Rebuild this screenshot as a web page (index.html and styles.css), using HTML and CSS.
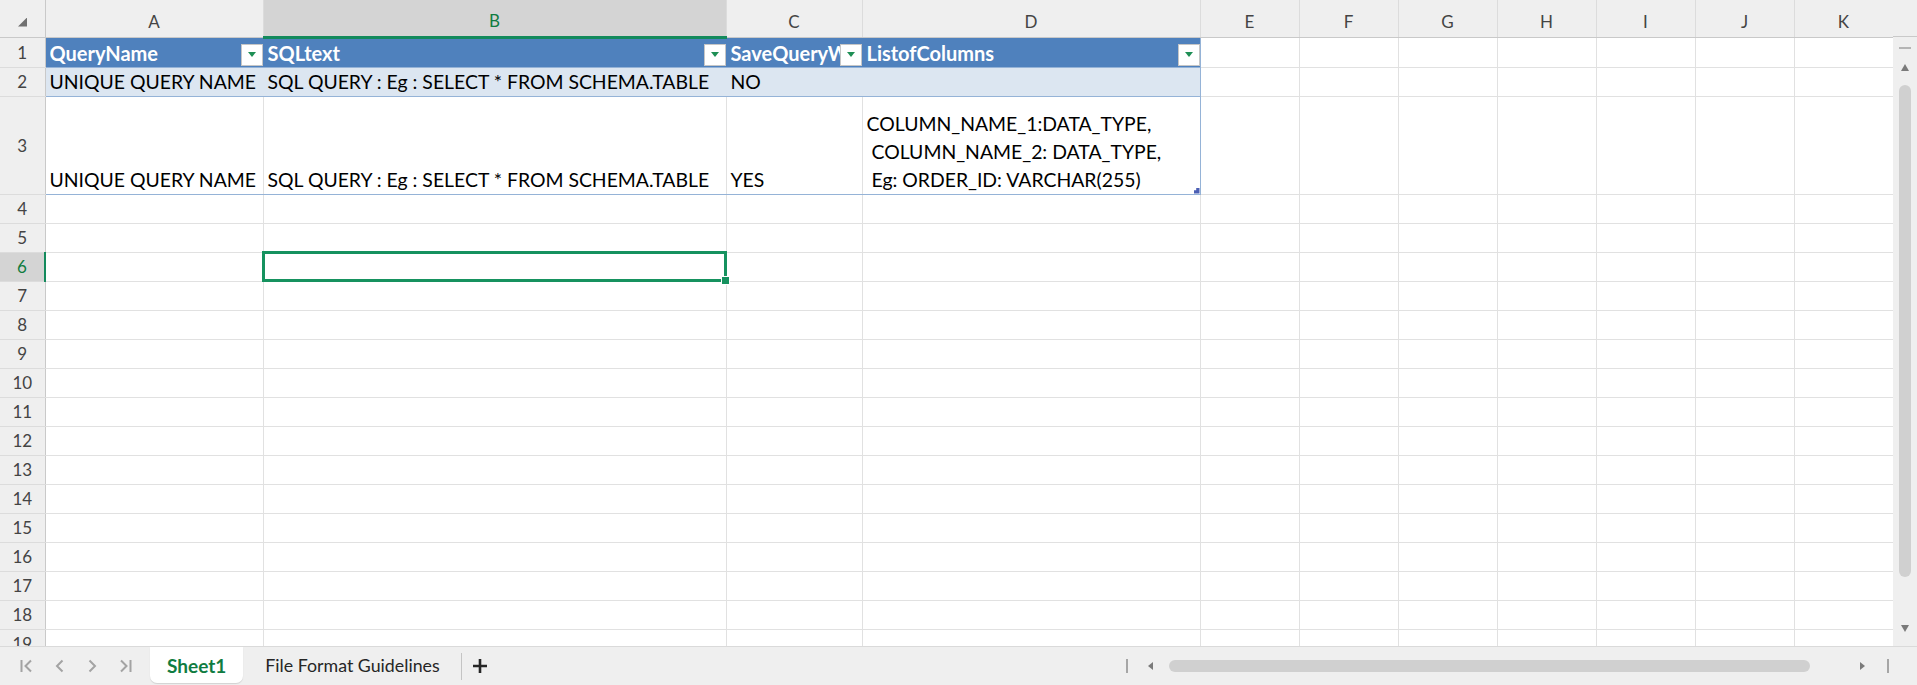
FILE: index.html
```html
<!DOCTYPE html>
<html lang="en">
<head>
    <meta charset="UTF-8">
    <title>Sheet1</title>
    <link rel="stylesheet" href="styles.css">
</head>
<body>
<div class="app">
    <div class="sheet">
        <div class="grid-wrap">
            <table class="grid">
                <colgroup>
                    <col class="c-row"><col class="c-a"><col class="c-b"><col class="c-c"><col class="c-d">
                    <col class="c-n"><col class="c-n"><col class="c-n"><col class="c-n"><col class="c-n"><col class="c-n"><col class="c-n">
                </colgroup>
                <thead>
                    <tr class="col-row">
                        <th class="corner"><span class="corner-mark"></span></th>
                        <th class="col-h">A</th>
                        <th class="col-h active">B</th>
                        <th class="col-h">C</th>
                        <th class="col-h">D</th>
                        <th class="col-h">E</th>
                        <th class="col-h">F</th>
                        <th class="col-h">G</th>
                        <th class="col-h">H</th>
                        <th class="col-h">I</th>
                        <th class="col-h">J</th>
                        <th class="col-h">K</th>
                    </tr>
                </thead>
                <tbody>
                    <tr class="r">
                        <th class="rh">1</th>
                        <td class="t-hd"><div class="hd"><span class="lbl">QueryName</span><span class="filter"></span></div></td>
                        <td class="t-hd"><div class="hd"><span class="lbl">SQLtext</span><span class="filter"></span></div></td>
                        <td class="t-hd"><div class="hd"><span class="lbl">SaveQueryW</span><span class="filter"></span></div></td>
                        <td class="t-hd t-edge"><div class="hd"><span class="lbl">ListofColumns</span><span class="filter"></span></div></td>
                        <td></td><td></td><td></td><td></td><td></td><td></td><td></td>
                    </tr>
                    <tr class="r">
                        <th class="rh">2</th>
                        <td class="t-band">UNIQUE QUERY NAME</td>
                        <td class="t-band">SQL QUERY : Eg : SELECT * FROM SCHEMA.TABLE</td>
                        <td class="t-band">NO</td>
                        <td class="t-band t-edge"></td>
                        <td></td><td></td><td></td><td></td><td></td><td></td><td></td>
                    </tr>
                    <tr class="tall">
                        <th class="rh">3</th>
                        <td class="t-last">UNIQUE QUERY NAME</td>
                        <td class="t-last">SQL QUERY : Eg : SELECT * FROM SCHEMA.TABLE</td>
                        <td class="t-last">YES</td>
                        <td class="t-last t-edge grip"><div class="multi">COLUMN_NAME_1:DATA_TYPE,
 COLUMN_NAME_2: DATA_TYPE,
 Eg: ORDER_ID: VARCHAR(255)</div></td>
                        <td></td><td></td><td></td><td></td><td></td><td></td><td></td>
                    </tr>
                    <tr class="r"><th class="rh">4</th><td></td><td></td><td></td><td></td><td></td><td></td><td></td><td></td><td></td><td></td><td></td></tr>
                    <tr class="r"><th class="rh">5</th><td></td><td></td><td></td><td></td><td></td><td></td><td></td><td></td><td></td><td></td><td></td></tr>
                    <tr class="r"><th class="rh active">6</th><td></td><td class="sel"></td><td></td><td></td><td></td><td></td><td></td><td></td><td></td><td></td><td></td></tr>
                    <tr class="r"><th class="rh">7</th><td></td><td></td><td></td><td></td><td></td><td></td><td></td><td></td><td></td><td></td><td></td></tr>
                    <tr class="r"><th class="rh">8</th><td></td><td></td><td></td><td></td><td></td><td></td><td></td><td></td><td></td><td></td><td></td></tr>
                    <tr class="r"><th class="rh">9</th><td></td><td></td><td></td><td></td><td></td><td></td><td></td><td></td><td></td><td></td><td></td></tr>
                    <tr class="r"><th class="rh">10</th><td></td><td></td><td></td><td></td><td></td><td></td><td></td><td></td><td></td><td></td><td></td></tr>
                    <tr class="r"><th class="rh">11</th><td></td><td></td><td></td><td></td><td></td><td></td><td></td><td></td><td></td><td></td><td></td></tr>
                    <tr class="r"><th class="rh">12</th><td></td><td></td><td></td><td></td><td></td><td></td><td></td><td></td><td></td><td></td><td></td></tr>
                    <tr class="r"><th class="rh">13</th><td></td><td></td><td></td><td></td><td></td><td></td><td></td><td></td><td></td><td></td><td></td></tr>
                    <tr class="r"><th class="rh">14</th><td></td><td></td><td></td><td></td><td></td><td></td><td></td><td></td><td></td><td></td><td></td></tr>
                    <tr class="r"><th class="rh">15</th><td></td><td></td><td></td><td></td><td></td><td></td><td></td><td></td><td></td><td></td><td></td></tr>
                    <tr class="r"><th class="rh">16</th><td></td><td></td><td></td><td></td><td></td><td></td><td></td><td></td><td></td><td></td><td></td></tr>
                    <tr class="r"><th class="rh">17</th><td></td><td></td><td></td><td></td><td></td><td></td><td></td><td></td><td></td><td></td><td></td></tr>
                    <tr class="r"><th class="rh">18</th><td></td><td></td><td></td><td></td><td></td><td></td><td></td><td></td><td></td><td></td><td></td></tr>
                    <tr class="r"><th class="rh">19</th><td></td><td></td><td></td><td></td><td></td><td></td><td></td><td></td><td></td><td></td><td></td></tr>
                </tbody>
            </table>
        </div>
        <div class="vscroll">
            <div class="vs-head"></div>
            <span class="vs-dash"></span>
            <span class="vs-up"></span>
            <span class="vs-thumb"></span>
            <span class="vs-down"></span>
        </div>
    </div>

    <div class="tabbar">
        <div class="nav">
            <span class="nav-btn">
                <svg width="13" height="14" viewBox="0 0 13 14"><path d="M1.5 1v12M11 1.5 5.5 7l5.5 5.5" fill="none" stroke="#a3a3a3" stroke-width="2"/></svg>
            </span>
            <span class="nav-btn">
                <svg width="9" height="14" viewBox="0 0 9 14"><path d="M7.5 1.5 2 7l5.5 5.5" fill="none" stroke="#a3a3a3" stroke-width="2"/></svg>
            </span>
            <span class="nav-btn">
                <svg width="9" height="14" viewBox="0 0 9 14"><path d="M1.5 1.5 7 7l-5.5 5.5" fill="none" stroke="#a3a3a3" stroke-width="2"/></svg>
            </span>
            <span class="nav-btn">
                <svg width="13" height="14" viewBox="0 0 13 14"><path d="M2 1.5 7.5 7 2 12.5M11.5 1v12" fill="none" stroke="#a3a3a3" stroke-width="2"/></svg>
            </span>
        </div>
        <div class="tab active">Sheet1</div>
        <div class="tab">File Format Guidelines</div>
        <span class="tab-sep"></span>
        <span class="add">
            <svg width="14" height="14" viewBox="0 0 14 14"><path d="M7 0v14M0 7h14" stroke="#262626" stroke-width="2.6"/></svg>
        </span>
        <div class="hscroll">
            <span class="hs-sep"></span>
            <span class="hs-left"></span>
            <span class="hs-thumb"></span>
            <span class="hs-right"></span>
            <span class="hs-sep end"></span>
        </div>
    </div>
</div>
</body>
</html>
```

FILE: styles.css
```css
* {
    box-sizing: border-box;
}
body {
    margin: 0;
    font-family: Lato, "Liberation Sans", sans-serif;
    background-color: #fff;
}
.app {
    width: 1917px;
    height: 685px;
    display: flex;
    flex-direction: column;
    overflow: hidden;
}
.sheet {
    flex: none;
    height: 646px;
    display: flex;
    overflow: hidden;
}
.grid-wrap {
    flex: none;
    width: 1893px;
    overflow: hidden;
}

/* grid */
.grid {
    table-layout: fixed;
    width: 1893px;
    border-collapse: collapse;
    font-size: 19.4px;
    color: #000;
}
.c-row { width: 45px; }
.c-a { width: 218px; }
.c-b { width: 463px; }
.c-c { width: 136px; }
.c-d { width: 338px; }
.c-n { width: 99px; }

.col-row { height: 37px; }
.r { height: 29px; }
.tall { height: 98px; }

.corner {
    background-color: #efefef;
    border-right: 1px solid #c9c9c9;
    border-bottom: 1px solid #c9c9c9;
    padding: 0 0 10px 18px;
    vertical-align: bottom;
}
.corner-mark {
    display: block;
    width: 9px;
    height: 9px;
    background-color: #707070;
    clip-path: polygon(100% 0, 100% 100%, 0 100%);
}
.col-h {
    background-color: #efefef;
    color: #444;
    font-size: 17px;
    font-weight: 400;
    line-height: 24px;
    padding: 0 0 3px;
    text-align: center;
    vertical-align: bottom;
    border-right: 1px solid #dcdcdc;
    border-bottom: 1px solid #c9c9c9;
}
.col-h.active {
    background-color: #d4d4d4;
    color: #107c41;
    border-bottom: 3px solid #138a5c;
}
.rh {
    background-color: #efefef;
    color: #444;
    font-size: 17px;
    font-weight: 400;
    padding: 0;
    text-align: center;
    vertical-align: middle;
    border-right: 1px solid #c9c9c9;
    border-bottom: 1px solid #dcdcdc;
}
.rh.active {
    background-color: #d4d4d4;
    color: #107c41;
    border-right: 2px solid #138a5c;
}
td {
    border: 1px solid #e1e1e1;
    padding: 0 4px;
    line-height: 28px;
    vertical-align: bottom;
    white-space: nowrap;
}

/* table object */
.t-hd {
    background-color: #4f81bd;
    color: #fff;
    font-size: 20px;
    font-weight: 700;
    padding: 0 0 0 4px;
    border-left-color: #4f81bd;
    border-right-color: #4f81bd;
    border-bottom: 1px solid #95b3d7;
}
.t-band {
    background-color: #dce6f1;
    border-left-color: #dce6f1;
    border-right-color: #dce6f1;
    border-bottom: 1px solid #95b3d7;
}
.t-last {
    border-bottom: 1px solid #95b3d7;
}
td.t-edge {
    border-right: 1px solid #95b3d7;
}
.hd {
    display: flex;
    align-items: flex-end;
}
.lbl {
    flex: 1;
    min-width: 0;
    overflow: hidden;
    white-space: nowrap;
}
.filter {
    flex: none;
    width: 22px;
    height: 22px;
    margin-bottom: 1px;
    background-color: #fff;
    border: 1px solid #c6c6c6;
    display: flex;
    align-items: center;
    justify-content: center;
}
.filter::before {
    content: "";
    border-left: 4px solid transparent;
    border-right: 4px solid transparent;
    border-top: 5px solid #1e8f55;
}
.multi {
    white-space: pre;
}
.grip {
    position: relative;
}
.grip::after {
    content: "";
    position: absolute;
    right: 0;
    bottom: 0;
    width: 6px;
    height: 6px;
    background-color: #4b5fb4;
    clip-path: polygon(100% 0, 100% 100%, 0 100%, 0 45%, 45% 45%, 45% 0);
}
.sel {
    position: relative;
    outline: 3px solid #16925f;
    outline-offset: -2px;
}
.sel::after {
    content: "";
    position: absolute;
    right: -4px;
    bottom: -4px;
    width: 7px;
    height: 7px;
    background-color: #16925f;
    border: 1px solid #fff;
}

/* vertical scrollbar */
.vscroll {
    flex: none;
    width: 24px;
    background-color: #efefef;
    display: flex;
    flex-direction: column;
    align-items: center;
}
.vs-head {
    width: 100%;
    height: 37px;
    border-bottom: 1px solid #c9c9c9;
}
.vs-dash {
    width: 12px;
    height: 2px;
    margin-top: 10px;
    background-color: #b5b5b5;
}
.vs-up {
    margin-top: 15px;
    border-left: 4px solid transparent;
    border-right: 4px solid transparent;
    border-bottom: 7px solid #7a7a7a;
}
.vs-thumb {
    width: 12px;
    height: 492px;
    margin-top: 14px;
    border-radius: 6px;
    background-color: #d0d0d0;
}
.vs-down {
    margin-top: 48px;
    border-left: 4px solid transparent;
    border-right: 4px solid transparent;
    border-top: 7px solid #7a7a7a;
}

/* sheet tabs */
.tabbar {
    flex: none;
    height: 39px;
    background-color: #efefef;
    border-top: 1px solid #dadada;
    display: flex;
    align-items: stretch;
}
.nav {
    width: 142px;
    padding-left: 10px;
    display: flex;
    align-items: center;
}
.nav-btn {
    width: 33px;
    display: flex;
    justify-content: center;
}
.tab {
    display: flex;
    align-items: center;
    margin-bottom: 2px;
    padding: 0 21px 0 22px;
    font-size: 17.8px;
    color: #262626;
}
.tab.active {
    margin-left: 8px;
    padding: 0 17px;
    background-color: #fff;
    color: #107c41;
    font-size: 19px;
    font-weight: 700;
    border-radius: 0 0 7px 7px;
    box-shadow: 0 1px 1px rgba(0, 0, 0, 0.12);
}
.tab-sep {
    width: 1px;
    margin: 6px 0 5px;
    background-color: #c4c4c4;
}
.add {
    margin-left: 11px;
    display: flex;
    align-items: center;
}
.hscroll {
    margin-left: auto;
    width: 797px;
    display: flex;
    align-items: center;
}
.hs-sep {
    width: 2px;
    height: 14px;
    margin-left: 6px;
    background-color: #a6a6a6;
}
.hs-sep.end {
    margin-left: 22px;
}
.hs-left {
    margin-left: 20px;
    border-top: 4px solid transparent;
    border-bottom: 4px solid transparent;
    border-right: 5px solid #7a7a7a;
}
.hs-thumb {
    width: 641px;
    height: 12px;
    margin-left: 16px;
    border-radius: 6px;
    background-color: #d0d0d0;
}
.hs-right {
    margin-left: 50px;
    border-top: 4px solid transparent;
    border-bottom: 4px solid transparent;
    border-left: 5px solid #7a7a7a;
}
```
